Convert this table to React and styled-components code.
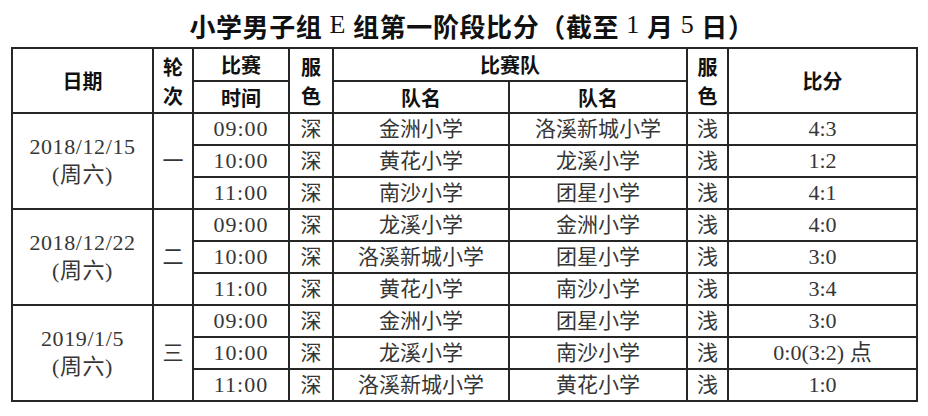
import React from 'react';
import styled, { createGlobalStyle } from 'styled-components';

const GlobalStyle = createGlobalStyle`
  html, body {
    margin: 0;
    padding: 0;
    background: #fff;
  }
  body {
    font-family: "Liberation Serif", "Noto Sans CJK SC", serif;
    color: #333;
  }
`;

const Page = styled.div`
  width: 928px;
  display: flex;
  flex-direction: column;
  align-items: center;
`;

const Title = styled.h1`
  flex-shrink: 0;
  margin: 0 0 0 16px;
  height: 47px;
  box-sizing: border-box;
  padding-top: 3px;
  display: flex;
  align-items: center;
  font-family: "Liberation Serif", "Noto Sans CJK SC", serif;
  font-size: 26px;
  font-weight: 700;
  letter-spacing: 0.6px;
  color: #111;
  white-space: pre;
`;

const Latin = styled.span`
  font-weight: 400;
`;

const Table = styled.table`
  flex-shrink: 0;
  border-collapse: collapse;
  table-layout: fixed;
  width: 905px;
  margin-left: 1px;
  border: 2px solid #1e1e1e;
`;

const Head = styled.th`
  border: 2px solid #262626;
  height: ${(p) => p.$h || 30}px;
  padding: 0;
  text-align: center;
  vertical-align: middle;
  font-family: "Noto Sans CJK SC", sans-serif;
  font-size: 20px;
  font-weight: 700;
  line-height: 29px;
  color: #111;
`;

const Cell = styled.td`
  border: 2px solid #262626;
  height: 30px;
  padding: 0;
  text-align: center;
  vertical-align: middle;
  font-size: ${(p) => (p.$num ? 22 : 21)}px;
  letter-spacing: ${(p) => p.$spacing || 0}px;
  line-height: 28px;
  color: #363636;
`;

const cols = [141, 40, 96, 44, 176, 178, 41, 189];

const groups = [
  {
    date: '2018/12/15',
    round: '一',
    games: [
      ['09:00', '金洲小学', '洛溪新城小学', '4:3'],
      ['10:00', '黄花小学', '龙溪小学', '1:2'],
      ['11:00', '南沙小学', '团星小学', '4:1'],
    ],
  },
  {
    date: '2018/12/22',
    round: '二',
    games: [
      ['09:00', '龙溪小学', '金洲小学', '4:0'],
      ['10:00', '洛溪新城小学', '团星小学', '3:0'],
      ['11:00', '黄花小学', '南沙小学', '3:4'],
    ],
  },
  {
    date: '2019/1/5',
    round: '三',
    games: [
      ['09:00', '金洲小学', '团星小学', '3:0'],
      ['10:00', '龙溪小学', '南沙小学', '0:0(3:2) 点'],
      ['11:00', '洛溪新城小学', '黄花小学', '1:0'],
    ],
  },
];

export default function App() {
  return (
    <Page>
      <GlobalStyle />
      <Title>
        小学男子组 <Latin>E</Latin> 组第一阶段比分（截至 <Latin>1</Latin> 月 <Latin>5</Latin> 日）
      </Title>
      <Table>
        <colgroup>
          {cols.map((w, i) => (
            <col key={i} style={{ width: w }} />
          ))}
        </colgroup>
        <thead>
          <tr>
            <Head rowSpan={2}>日期</Head>
            <Head rowSpan={2}>轮<br />次</Head>
            <Head $h={31}>比赛</Head>
            <Head rowSpan={2}>服<br />色</Head>
            <Head colSpan={2} $h={31}>比赛队</Head>
            <Head rowSpan={2}>服<br />色</Head>
            <Head rowSpan={2}>比分</Head>
          </tr>
          <tr>
            <Head>时间</Head>
            <Head>队名</Head>
            <Head>队名</Head>
          </tr>
        </thead>
        <tbody>
          {groups.map((g) =>
            g.games.map((game, i) => (
              <tr key={g.date + i}>
                {i === 0 && (
                  <>
                    <Cell rowSpan={3} $num $spacing={0.6}>
                      {g.date}
                      <br />
                      (周六)
                    </Cell>
                    <Cell rowSpan={3}>{g.round}</Cell>
                  </>
                )}
                <Cell $num $spacing={1}>{game[0]}</Cell>
                <Cell>深</Cell>
                <Cell>{game[1]}</Cell>
                <Cell>{game[2]}</Cell>
                <Cell>浅</Cell>
                <Cell $num>{game[3]}</Cell>
              </tr>
            ))
          )}
        </tbody>
      </Table>
    </Page>
  );
}
